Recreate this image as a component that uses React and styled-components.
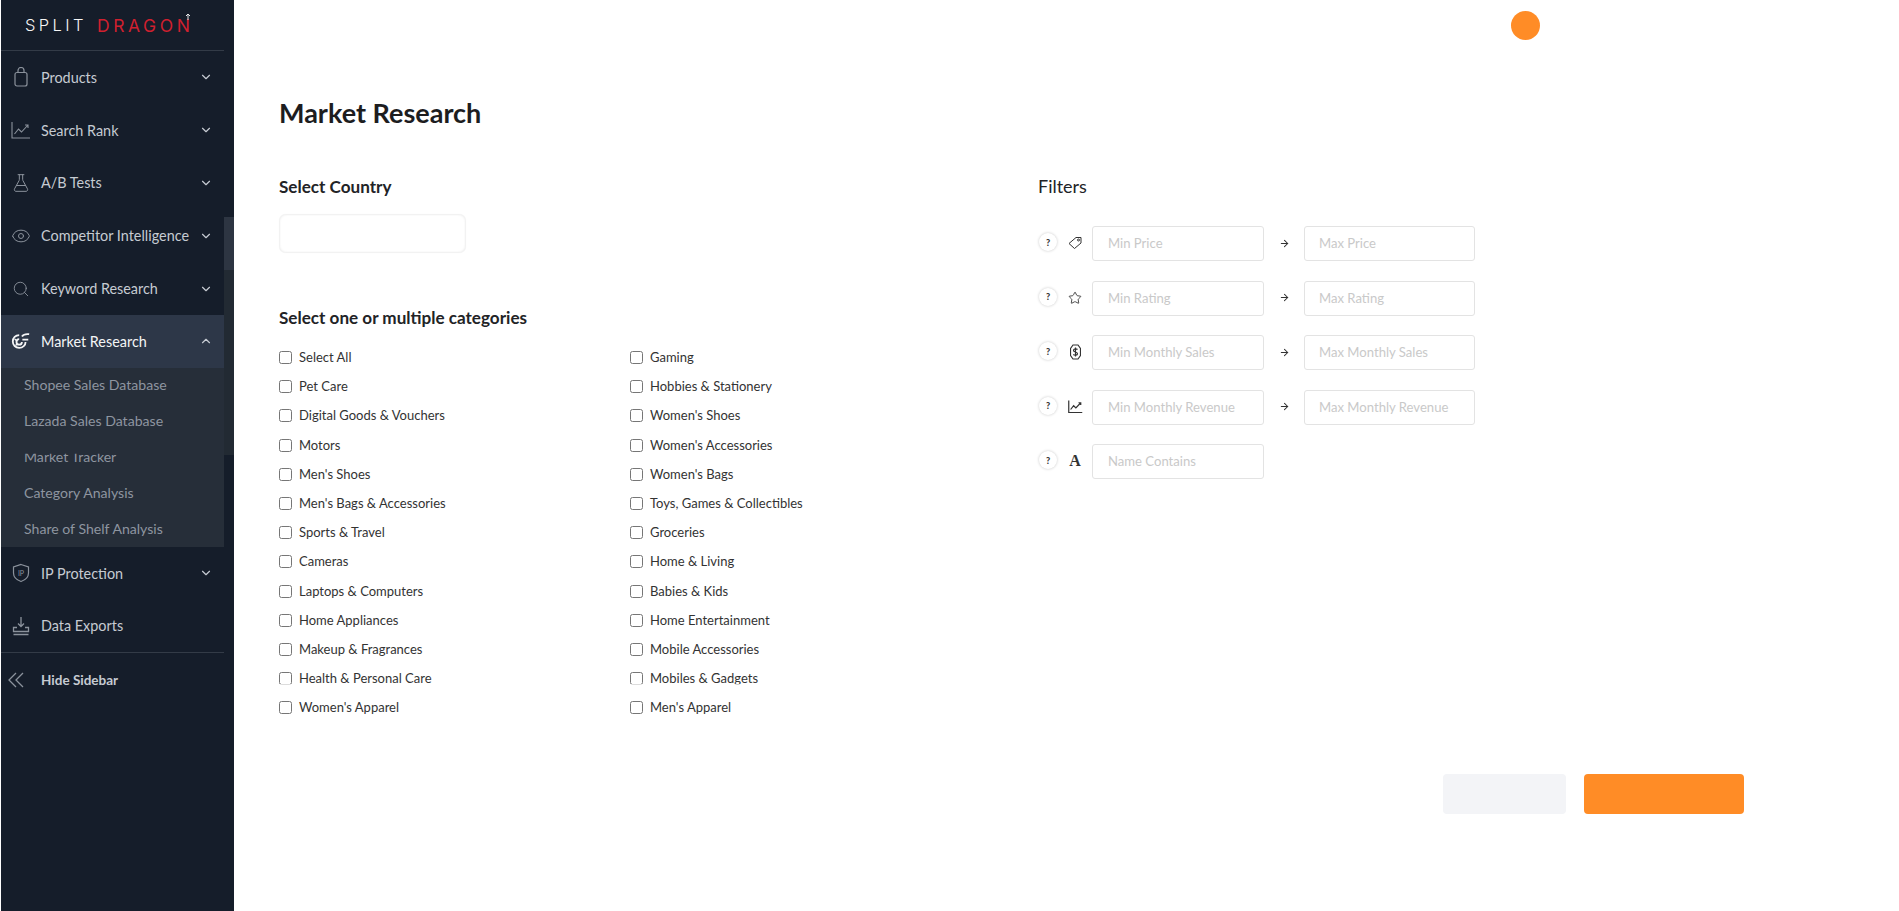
import React from 'react';
import styled, { createGlobalStyle } from 'styled-components';
import {
  ChevronDown, ChevronUp, Eye, FlaskConical, Search, ArrowRight, Star,
} from 'lucide-react';

const GlobalStyle = createGlobalStyle`
  html, body {
    margin: 0;
    padding: 0;
    background: #fff;
    font-family: Lato, "Open Sans", sans-serif;
  }
  * { box-sizing: border-box; }
`;

const Layout = styled.div`
  display: flex;
  width: 1899px;
  height: 911px;
  overflow: hidden;
  background: #fff;
`;

const Sidebar = styled.aside`
  width: 233px;
  margin-left: 1px;
  flex-shrink: 0;
  display: flex;
  background: #151d2a;
  color: #c6cbd2;
`;

const SideBody = styled.div`
  width: 223px;
  display: flex;
  flex-direction: column;
`;

const ScrollTrack = styled.div`
  width: 10px;
  padding-top: 217px;
`;

const ScrollThumb = styled.div`
  height: 53px;
  background: #2d3542;
`;

const ScrollRest = styled.div`
  height: 185px;
  background: #222a33;
`;

const LogoBar = styled.div`
  height: 51px;
  display: flex;
  align-items: center;
  padding-left: 24px;
  border-bottom: 1px solid #333b47;
  font-family: Inter, sans-serif;
  font-size: 16.5px;
  font-weight: 300;
  letter-spacing: 3.4px;
  white-space: nowrap;
  color: #f5f5f5;
`;

const LogoRed = styled.span`
  position: relative;
  margin-left: 10px;
  color: #d0202f;
  font-size: 17.5px;
  font-weight: 400;
  letter-spacing: 3.6px;
`;

const LogoArrow = styled.svg`
  position: absolute;
  right: 3px;
  top: -2px;
`;

const NavRow = styled.div`
  height: 52.8px;
  display: flex;
  align-items: center;
  padding: 0 11px 0 10px;
  font-size: 14.4px;
  white-space: nowrap;
  color: ${(p) => (p.$active ? '#f4f5f6' : '#c6cbd2')};
  background: ${(p) => (p.$active ? '#2d3748' : 'transparent')};
`;

const NavIcon = styled.span`
  width: 20px;
  height: 20px;
  margin-right: 10px;
  display: flex;
  align-items: center;
  justify-content: center;
  color: ${(p) => (p.$active ? '#f4f5f6' : '#8b929c')};
`;

const NavLabel = styled.span`
  flex: 1;
`;

const NavChevron = styled.span`
  display: flex;
  color: #c6cbd2;
`;

const SubPanel = styled.div`
  background: #262e39;
  padding-left: 23px;
  height: 179px;
`;

const SubItem = styled.div`
  height: 36px;
  line-height: 34px;
  font-size: 14.1px;
  white-space: nowrap;
  color: #8e95a0;
  clip-path: ${(p) => (p.$clipped ? 'inset(14px 0 12px 0)' : 'none')};
`;

const SideRule = styled.div`
  height: 1px;
  background: #333b47;
`;

const HideRow = styled.div`
  height: 53px;
  display: flex;
  align-items: center;
  padding-left: 6px;
  font-size: 13.5px;
  font-weight: 700;
  color: #c6cbd2;
`;

const HideIcon = styled.span`
  display: flex;
  width: 34px;
  color: #8b929c;
`;

const Main = styled.main`
  flex: 1;
  display: flex;
  flex-direction: column;
`;

const TopBar = styled.div`
  height: 82px;
  padding: 11px 0 0 1277px;
`;

const Avatar = styled.div`
  width: 29px;
  height: 29px;
  border-radius: 50%;
  background: #ff8c26;
`;

const Content = styled.div`
  padding-left: 45px;
`;

const Title = styled.h1`
  margin: 0;
  height: 62px;
  font-size: 27px;
  line-height: 62px;
  font-weight: 700;
  color: #1d1d1f;
`;

const Columns = styled.div`
  display: flex;
  padding-top: 29px;
`;

const LeftColumn = styled.div`
  width: 759px;
`;

const SectionHeading = styled.h2`
  margin: 0;
  font-size: 17.1px;
  line-height: 28px;
  font-weight: 700;
  color: #222326;
`;

const CountrySelect = styled.div`
  width: 187px;
  height: 39px;
  margin: 13px 0 51px;
  border-radius: 7px;
  background: #fff;
  box-shadow: inset 0 0 2px 1px #eeeeee, 0 0 1px #eeeeee;
`;

const CategoryGrid = styled.div`
  display: grid;
  grid-template-columns: 351px 351px;
  padding-top: 11px;
`;

const CategoryRow = styled.label`
  height: 29.2px;
  padding-top: 6px;
  display: flex;
  align-items: flex-start;
  gap: 7px;
  font-size: 13px;
  line-height: 17px;
  color: #333;
  clip-path: ${(p) => (p.$clipped ? 'inset(0 0 9px 0)' : 'none')};
`;

const Check = styled.input.attrs({ type: 'checkbox' })`
  margin: 2px 0 0;
  width: 13px;
  height: 13px;
`;

const FilterColumn = styled.div`
  width: 450px;
`;

const FilterHeading = styled.h2`
  margin: -1px 0 26px;
  font-size: 18px;
  line-height: 28px;
  font-weight: 400;
  color: #222326;
`;

const FilterRow = styled.div`
  height: 54.6px;
  display: flex;
  align-items: flex-start;
`;

const HelpDot = styled.span`
  width: 18px;
  height: 18px;
  margin: 7px 0 0 1px;
  border-radius: 50%;
  background: #fff;
  box-shadow: 0 0 3px rgba(0, 0, 0, 0.22);
  display: flex;
  align-items: center;
  justify-content: center;
  font-size: 9px;
  font-weight: 900;
  color: #333;
`;

const FilterIcon = styled.span`
  width: 18px;
  height: 34px;
  margin: 0 8px 0 9px;
  display: flex;
  align-items: center;
  justify-content: center;
  color: #333;
`;

const LetterIcon = styled.span`
  font-family: "Liberation Serif", serif;
  font-size: 16px;
  font-weight: 700;
  color: #333;
`;

const FilterBox = styled.div`
  width: 172px;
  height: 35px;
  padding-left: 15px;
  border: 1px solid #e3e3e3;
  border-radius: 3px;
  font-size: 13.1px;
  line-height: 33px;
  color: #c9c9c9;
`;

const MaxBox = styled(FilterBox)`
  width: 171px;
  padding-left: 14px;
`;

const RangeArrow = styled.span`
  width: 40px;
  height: 34px;
  display: flex;
  align-items: center;
  justify-content: center;
  color: #333;
`;

const ButtonBar = styled.div`
  display: flex;
  gap: 18px;
  padding: 52px 0 0 1164px;
`;

const CancelButton = styled.div`
  width: 123px;
  height: 40px;
  border-radius: 4px;
  background: #f3f4f7;
`;

const SubmitButton = styled.div`
  width: 160px;
  height: 40px;
  border-radius: 4px;
  background: #ff8c26;
`;

const BagIcon = () => (
  <svg width="18" height="20" viewBox="0 0 18 20" fill="none" stroke="currentColor" strokeWidth="1.2">
    <rect x="3" y="5.5" width="12" height="13.5" rx="2" />
    <path d="M6 5.5V3.500a3 3 0 0 1 6 0v2" />
  </svg>
);

const ChartIcon = ({ size = 20, width = 1.1 }) => (
  <svg width={size} height={size} viewBox="0 0 20 20" fill="none" stroke="currentColor" strokeWidth={width}>
    <path d="M1 2v16h18" />
    <path d="M3.500 14l4-5 3 3 6.500-7M14 5h3v3" />
  </svg>
);

const TargetIcon = () => (
  <svg width="22" height="20" viewBox="0 0 22 20" fill="none" stroke="currentColor" strokeWidth="2">
    <path d="M9 3.500C5 3.500 2 6.500 2 10.500s3 7 7 7 7-3 7-6.500" />
    <path d="M12 5c1.500-2 4.500-3 8-2.500M12.500 8.500H19" />
    <path d="M9 8a3 3 0 1 0 3 3" />
    <path d="M4 8l3 2M5 15l2-2" strokeWidth="1.500" />
  </svg>
);

const ShieldIcon = () => (
  <svg width="20" height="20" viewBox="0 0 20 20" fill="none" stroke="currentColor" strokeWidth="1.2">
    <path d="M10 1.500l7.500 2.500v6c0 4-3.200 7-7.500 8.500C5.700 17 2.500 14 2.500 10V4z" />
    <text x="10" y="12.500" textAnchor="middle" fontSize="7" fontFamily="Lato" fill="currentColor" stroke="none">IP</text>
  </svg>
);

const ExportIcon = () => (
  <svg width="20" height="20" viewBox="0 0 20 20" fill="none" stroke="currentColor" strokeWidth="1.3">
    <path d="M10 1v9M7 7.500l3 3 3-3M6 11.500H2.500v4h15v-4H14M2.500 18.500h15" />
  </svg>
);

const DoubleLeftIcon = () => (
  <svg width="18" height="16" viewBox="0 0 18 16" fill="none" stroke="currentColor" strokeWidth="1.3">
    <path d="M9 1L2 8l7 7M16 1L9 8l7 7" />
  </svg>
);

const TagIcon = () => (
  <svg width="14" height="14" viewBox="0 0 14 14" fill="none" stroke="currentColor" strokeWidth="1">
    <path d="M1 7.500L8 1.500h5v5.500l-6.500 5.500z" />
    <circle cx="10.500" cy="4" r="1" />
  </svg>
);

const MoneyIcon = () => (
  <svg width="11" height="16" viewBox="0 0 11 16" fill="none" stroke="currentColor" strokeWidth="1.2">
    <path d="M3 1h5l2.500 3.500v7L8 15H3L.5 11.500v-7z" />
    <path d="M7.500 5.500C6.500 4.500 3.500 4.700 3.500 6.500c0 2 4 1 4 3.200 0 1.800-3 1.800-4.200.8M5.500 3.500v9" />
  </svg>
);

const navTop = [
  { label: 'Products', icon: <BagIcon /> },
  { label: 'Search Rank', icon: <ChartIcon /> },
  { label: 'A/B Tests', icon: <FlaskConical size={22} strokeWidth={1.2} /> },
  { label: 'Competitor Intelligence', icon: <Eye size={20} strokeWidth={1.2} /> },
  { label: 'Keyword Research', icon: <Search size={18} strokeWidth={1.2} /> },
];

const subItems = [
  'Shopee Sales Database',
  'Lazada Sales Database',
  'Market Tracker',
  'Category Analysis',
  'Share of Shelf Analysis',
];

const categories = [
  ['Select All', 'Gaming'],
  ['Pet Care', 'Hobbies & Stationery'],
  ['Digital Goods & Vouchers', "Women's Shoes"],
  ['Motors', "Women's Accessories"],
  ["Men's Shoes", "Women's Bags"],
  ["Men's Bags & Accessories", 'Toys, Games & Collectibles'],
  ['Sports & Travel', 'Groceries'],
  ['Cameras', 'Home & Living'],
  ['Laptops & Computers', 'Babies & Kids'],
  ['Home Appliances', 'Home Entertainment'],
  ['Makeup & Fragrances', 'Mobile Accessories'],
  ['Health & Personal Care', 'Mobiles & Gadgets'],
  ["Women's Apparel", "Men's Apparel"],
];

const filters = [
  { icon: <TagIcon />, min: 'Min Price', max: 'Max Price' },
  { icon: <Star size={14} strokeWidth={1.5} />, min: 'Min Rating', max: 'Max Rating' },
  { icon: <MoneyIcon />, min: 'Min Monthly Sales', max: 'Max Monthly Sales' },
  { icon: <ChartIcon size={15} width={1.6} />, min: 'Min Monthly Revenue', max: 'Max Monthly Revenue' },
  { icon: <LetterIcon>A</LetterIcon>, min: 'Name Contains' },
];

const NavItem = ({
  label, icon, active, open, plain,
}) => (
  <NavRow $active={active}>
    <NavIcon $active={active}>{icon}</NavIcon>
    <NavLabel>{label}</NavLabel>
    {!plain && (
      <NavChevron>
        {open ? <ChevronUp size={14} /> : <ChevronDown size={14} />}
      </NavChevron>
    )}
  </NavRow>
);

const App = () => (
  <Layout>
    <GlobalStyle />
    <Sidebar>
      <SideBody>
        <LogoBar>
          SPLIT
          <LogoRed>
            DRAGON
            <LogoArrow width="6" height="7" viewBox="0 0 6 7" fill="none" stroke="#e8e8e8" strokeWidth="1">
              <path d="M3 7V1M1 3l2-2 2 2" />
            </LogoArrow>
          </LogoRed>
        </LogoBar>
        {navTop.map((item) => (
          <NavItem key={item.label} label={item.label} icon={item.icon} />
        ))}
        <NavItem label="Market Research" icon={<TargetIcon />} active open />
        <SubPanel>
          {subItems.map((item) => (
            <SubItem key={item} $clipped={item === 'Market Tracker'}>{item}</SubItem>
          ))}
        </SubPanel>
        <NavItem label="IP Protection" icon={<ShieldIcon />} />
        <NavItem label="Data Exports" icon={<ExportIcon />} plain />
        <SideRule />
        <HideRow>
          <HideIcon><DoubleLeftIcon /></HideIcon>
          Hide Sidebar
        </HideRow>
      </SideBody>
      <ScrollTrack>
        <ScrollThumb />
        <ScrollRest />
      </ScrollTrack>
    </Sidebar>
    <Main>
      <TopBar><Avatar /></TopBar>
      <Content>
        <Title>Market Research</Title>
        <Columns>
          <LeftColumn>
            <SectionHeading>Select Country</SectionHeading>
            <CountrySelect />
            <SectionHeading>Select one or multiple categories</SectionHeading>
            <CategoryGrid>
              {categories.flat().map((name) => (
                <CategoryRow
                  key={name}
                  $clipped={name === 'Health & Personal Care' || name === 'Mobiles & Gadgets'}
                >
                  <Check />
                  {name}
                </CategoryRow>
              ))}
            </CategoryGrid>
          </LeftColumn>
          <FilterColumn>
            <FilterHeading>Filters</FilterHeading>
            {filters.map((f) => (
              <FilterRow key={f.min}>
                <HelpDot>?</HelpDot>
                <FilterIcon>{f.icon}</FilterIcon>
                <FilterBox>{f.min}</FilterBox>
                {f.max && (
                  <>
                    <RangeArrow><ArrowRight size={11} strokeWidth={2.2} /></RangeArrow>
                    <MaxBox>{f.max}</MaxBox>
                  </>
                )}
              </FilterRow>
            ))}
          </FilterColumn>
        </Columns>
        <ButtonBar>
          <CancelButton />
          <SubmitButton />
        </ButtonBar>
      </Content>
    </Main>
  </Layout>
);

export default App;
